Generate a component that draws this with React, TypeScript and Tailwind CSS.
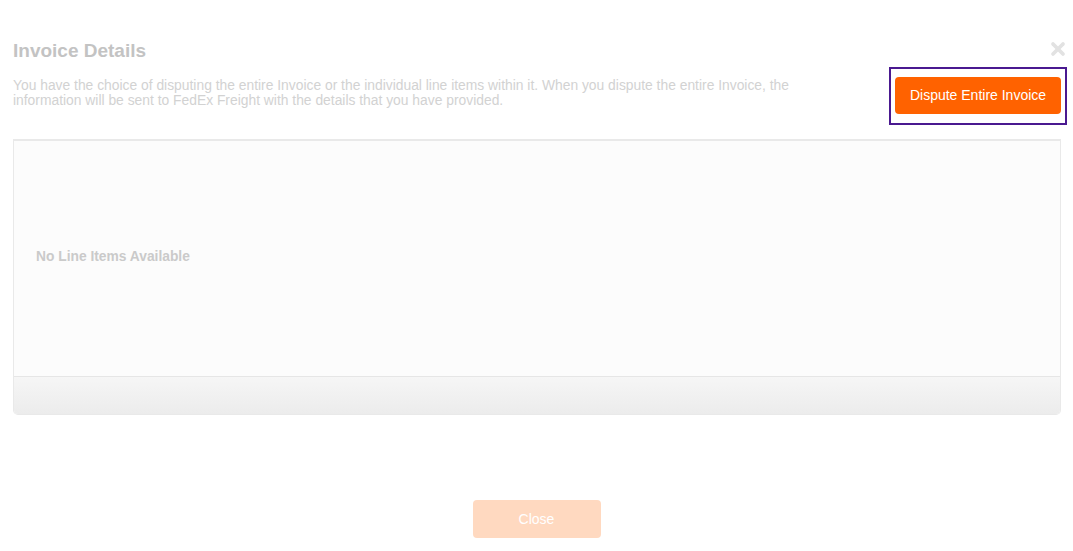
import { X } from 'lucide-react';

const App = () => {
  return (
    <div className="w-[1073px] h-[551px] bg-white font-['Liberation_Sans',Arial,sans-serif] flex flex-col px-[13px] pt-[38px] overflow-hidden">
      {/* Header */}
      <div className="flex justify-between">
        <div className="flex flex-col">
          <h2 className="text-[19px] leading-[24px] font-bold text-[#c3c3c3] mt-[1px]">Invoice Details</h2>
          <p className="mt-[15px] w-[790px] text-[13.85px] leading-[15px] text-[#d2d2d2]">
            You have the choice of disputing the entire Invoice or the individual line items within it. When you dispute the entire Invoice, the
            information will be sent to FedEx Freight with the details that you have provided.
          </p>
        </div>
        <div className="flex flex-col items-end -mr-[7px]">
          <X className="w-[20px] h-[20px] text-[#e2e2e2] -mr-[1px] mt-[1px]" strokeWidth={4.5} />
          <div className="mt-[8px] w-[178px] h-[58px] border-2 border-[#4a1990] flex items-center justify-center">
            <button className="w-[166px] h-[37px] -mt-[1px] rounded-[4px] bg-[#ff6200] text-white text-[14px]">
              Dispute Entire Invoice
            </button>
          </div>
        </div>
      </div>

      {/* Line items panel */}
      <div className="mt-[14px] w-[1048px] flex flex-col border-t-2 border-x border-b border-[#e9e9e9] rounded-b-[5px] overflow-hidden">
        <div className="h-[235px] bg-[#fcfcfc] flex items-center pl-[22px]">
          <span className="text-[13.8px] font-bold text-[#cacaca] -mt-[2px]">No Line Items Available</span>
        </div>
        <div className="h-[38px] border-t border-[#e6e6e6] bg-gradient-to-b from-[#f6f6f6] to-[#ececec]" />
      </div>

      {/* Footer */}
      <div className="flex justify-center mt-[85px]">
        <button className="w-[128px] h-[38px] rounded-[4px] bg-[#ffd9c0] text-white text-[14px]">Close</button>
      </div>
    </div>
  );
};

export default App;
